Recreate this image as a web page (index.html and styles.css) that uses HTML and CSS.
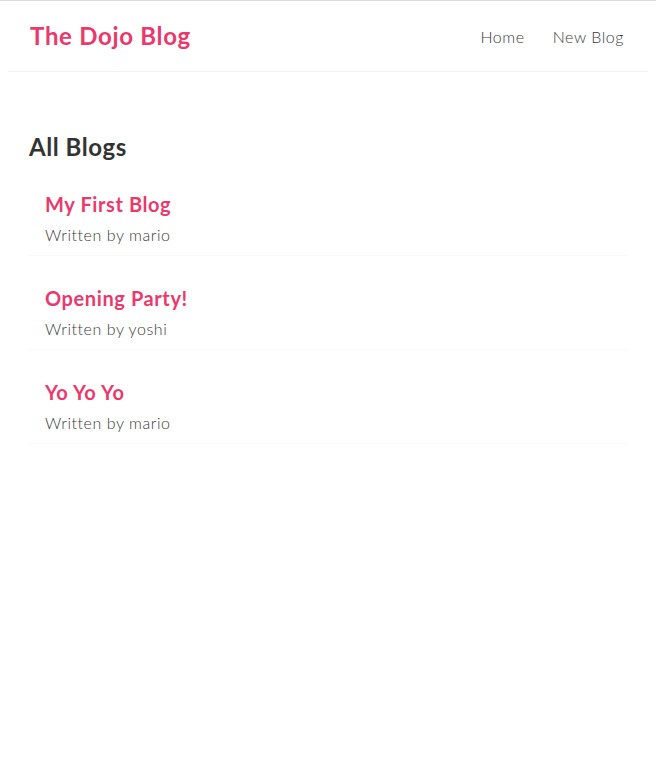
FILE: index.html
```html
<!DOCTYPE html>
<html lang="en">
<head>
<meta charset="utf-8">
<title>The Dojo Blog</title>
<link rel="stylesheet" href="styles.css">
</head>
<body>
<div class="app">
  <nav class="navbar">
    <h1>The Dojo Blog</h1>
    <div class="links">
      <a href="#">Home</a>
      <a href="#">New Blog</a>
    </div>
  </nav>
  <div class="content">
    <div class="blog-list">
      <h2>All Blogs</h2>
      <div class="blog-preview">
        <h2>My First Blog</h2>
        <p>Written by mario</p>
      </div>
      <div class="blog-preview">
        <h2>Opening Party!</h2>
        <p>Written by yoshi</p>
      </div>
      <div class="blog-preview">
        <h2>Yo Yo Yo</h2>
        <p>Written by mario</p>
      </div>
    </div>
  </div>
</div>
</body>
</html>
```

FILE: styles.css
```css
* {
  margin: 0;
  font-family: "Lato", "Open Sans", sans-serif;
  color: #333;
}
body {
  border-top: 1px solid #dcdcdc;
  background: #fff;
}
.navbar {
  padding: 20px;
  display: flex;
  align-items: center;
  max-width: 600px;
  margin: 0 auto;
  border-bottom: 1px solid #f2f2f2;
}
.navbar h1 {
  color: #ea396d;
  font-size: 24px;
  line-height: 30px;
  font-weight: 700;
  letter-spacing: 0.7px;
  padding-left: 2px;
}
.navbar .links {
  margin-left: auto;
  margin-right: -2px;
}
.navbar a {
  margin-left: 12px;
  text-decoration: none;
  padding: 6px;
  font-size: 16px;
  font-weight: 300;
  color: #3a3a3a;
  letter-spacing: 0.55px;
}
.content {
  max-width: 600px;
  margin: 40px auto;
  padding: 20px;
}
.blog-list > h2 {
  font-size: 24px;
  line-height: 30px;
  font-weight: 700;
  letter-spacing: 0.55px;
  padding-left: 1px;
}
.blog-preview {
  padding: 10px 16px;
  margin: 20px 0;
  border-bottom: 1px solid #fafafa;
}
.blog-preview h2 {
  font-size: 20px;
  line-height: 25px;
  color: #ea396d;
  margin-bottom: 8px;
  font-weight: 700;
  letter-spacing: 0.6px;
  padding-left: 1px;
}
.blog-preview p {
  font-size: 16px;
  line-height: 20px;
  font-weight: 300;
  letter-spacing: 0.55px;
  padding-left: 1px;
  color: #3a3a3a;
}
```
